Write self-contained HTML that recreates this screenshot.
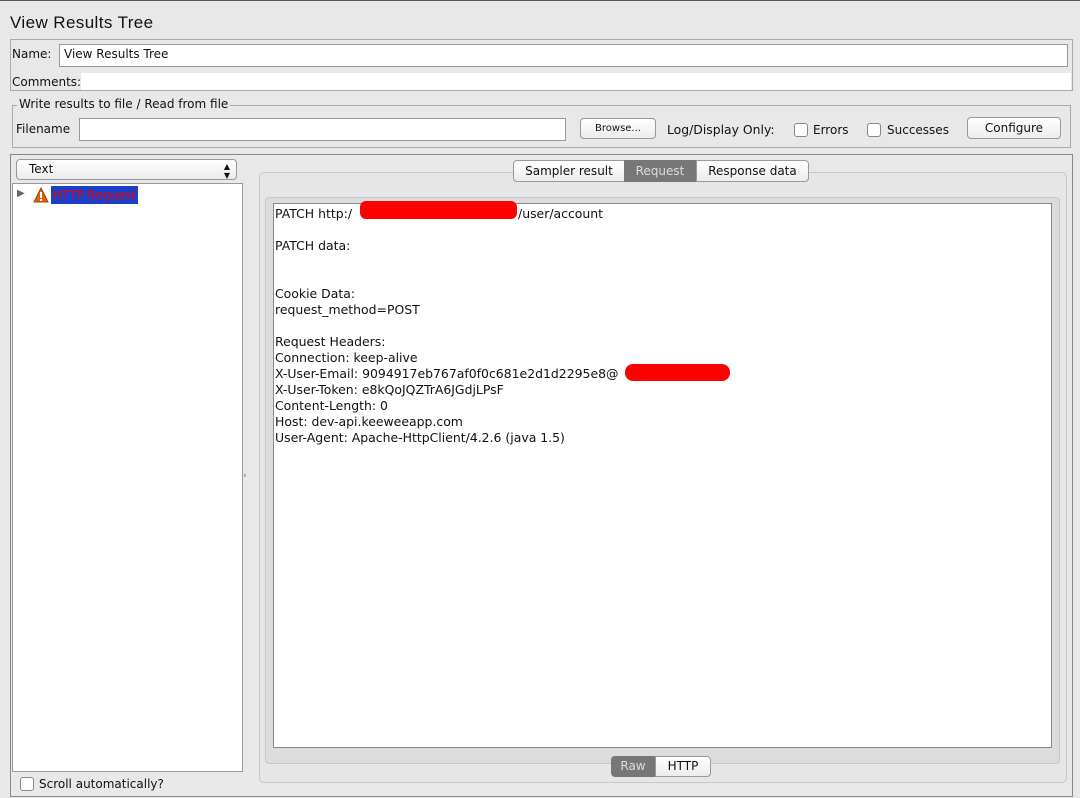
<!DOCTYPE html>
<html><head><style>
body{margin:0;width:1080px;height:798px;background:#e8e8e8;font-family:"DejaVu Sans",sans-serif;font-size:12px;color:#111;position:relative;overflow:hidden;border-top:1px solid #555;box-sizing:border-box}
.a{position:absolute;white-space:nowrap}
.btn{position:absolute;background:linear-gradient(#fff,#ececec);border:1px solid #999;border-radius:4px;text-align:center;box-sizing:border-box;white-space:nowrap}
.cb{position:absolute;width:12px;height:12px;border:1px solid #888;border-radius:3px;background:#fff}
.ln{position:absolute;left:275px;white-space:pre;font-size:12.45px}
</style></head><body>
<div class="a" style="left:10px;top:12px;font-size:17px;font-family:'Liberation Sans',sans-serif;letter-spacing:0.4px">View Results Tree</div>
<div class="a" style="left:10px;top:38px;width:1061px;height:50px;border:1px solid #aaa;background:#e8e8e8"></div>
<div class="a" style="left:81px;top:72px;width:990px;height:17px;background:#fff"></div>
<div class="a" style="left:12px;top:46px">Name:</div>
<div class="a" style="left:59px;top:43px;width:1007px;height:21px;border:1px solid #999;background:#fff"></div>
<div class="a" style="left:64px;top:46px">View Results Tree</div>
<div class="a" style="left:12px;top:74px">Comments:</div>
<div class="a" style="left:12px;top:104px;width:1057px;height:41px;border:1px solid #aaa"></div>
<div class="a" style="left:17px;top:96px;background:#e8e8e8;padding:0 2px">Write results to file / Read from file</div>
<div class="a" style="left:16px;top:121px">Filename</div>
<div class="a" style="left:79px;top:117px;width:485px;height:21px;border:1px solid #999;background:#fff"></div>
<div class="btn" style="left:580px;top:117px;width:76px;height:21px;font-size:10px;line-height:19px">Browse...</div>
<div class="a" style="left:667px;top:121px;font-size:12.4px">Log/Display Only:</div>
<div class="cb" style="left:794px;top:122px"></div><div class="a" style="left:813px;top:122px">Errors</div>
<div class="cb" style="left:867px;top:122px"></div><div class="a" style="left:887px;top:122px">Successes</div>
<div class="btn" style="left:967px;top:116px;width:94px;height:22px;line-height:20px">Configure</div>
<div class="a" style="left:10px;top:153px;width:1061px;height:641px;border:1px solid #888"></div>
<div class="btn" style="left:16px;top:158px;width:221px;height:21px;line-height:19px;text-align:left;padding-left:12px">Text<span style="position:absolute;right:6px;top:0;font-size:8px;line-height:9px;padding-top:2px">▲<br>▼</span></div>
<div class="a" style="left:12px;top:182px;width:229px;height:587px;background:#fff;border:1px solid #999"></div>
<div class="a" style="left:17px;top:187px;font-size:10px;color:#666">▶</div>
<svg class="a" style="left:33px;top:186px" width="16" height="16"><path d="M8 1 L15 15 L1 15 Z" fill="#e06010" stroke="#a04000"/><rect x="7" y="5" width="2" height="6" fill="#fff"/><rect x="7" y="12" width="2" height="2" fill="#fff"/></svg>
<div class="a" style="left:51px;top:185px;width:85px;height:18px;background:#1a3fc8;color:#e00;line-height:18px;padding-left:2px;overflow:hidden">HTTP Request</div>
<div class="a" style="left:243px;top:470px;font-size:9px;color:#666">‹</div>
<div class="cb" style="left:20px;top:776px"></div><div class="a" style="left:39px;top:776px">Scroll automatically?</div>
<div class="a" style="left:259px;top:171px;width:806px;height:609px;border:1px solid #c8c8c8;border-radius:5px;background:#e6e6e6"></div>
<div class="a" style="left:265px;top:196px;width:793px;height:565px;border:1px solid #c8c8c8;border-radius:4px;background:#dcdcdc"></div>
<div class="btn" style="left:513px;top:159px;width:112px;height:22px;line-height:20px;border-radius:4px 0 0 4px">Sampler result</div>
<div class="a" style="left:624px;top:159px;width:72px;height:22px;line-height:22px;background:#777;color:#ddd;text-align:center;box-sizing:border-box">Request</div>
<div class="btn" style="left:696px;top:159px;width:113px;height:22px;line-height:20px;border-radius:0 4px 4px 0">Response data</div>
<div class="a" style="left:273px;top:202px;width:777px;height:543px;background:#fff;border:1px solid #888"></div>
<div class="ln" style="top:205px">PATCH http:/</div>
<div class="ln" style="top:205px;left:518px">/user/account</div>
<div class="a" style="left:360px;top:200px;width:157px;height:18px;background:#f00;border-radius:6px"></div>
<div class="ln" style="top:237px">PATCH data:</div>
<div class="ln" style="top:285px">Cookie Data:</div>
<div class="ln" style="top:301px">request_method=POST</div>
<div class="ln" style="top:333px">Request Headers:</div>
<div class="ln" style="top:349px">Connection: keep-alive</div>
<div class="ln" style="top:365px">X-User-Email: 9094917eb767af0f0c681e2d1d2295e8@</div>
<div class="a" style="left:625px;top:363px;width:105px;height:17px;background:#f00;border-radius:8px"></div>
<div class="ln" style="top:381px">X-User-Token: e8kQoJQZTrA6JGdjLPsF</div>
<div class="ln" style="top:397px">Content-Length: 0</div>
<div class="ln" style="top:413px">Host: dev-api.keeweeapp.com</div>
<div class="ln" style="top:429px">User-Agent: Apache-HttpClient/4.2.6 (java 1.5)</div>
<div class="a" style="left:611px;top:755px;width:44px;height:21px;line-height:21px;background:#777;color:#ddd;text-align:center;border-radius:4px 0 0 4px">Raw</div>
<div class="btn" style="left:655px;top:755px;width:56px;height:21px;line-height:19px;border-radius:0 4px 4px 0">HTTP</div>
</body></html>
